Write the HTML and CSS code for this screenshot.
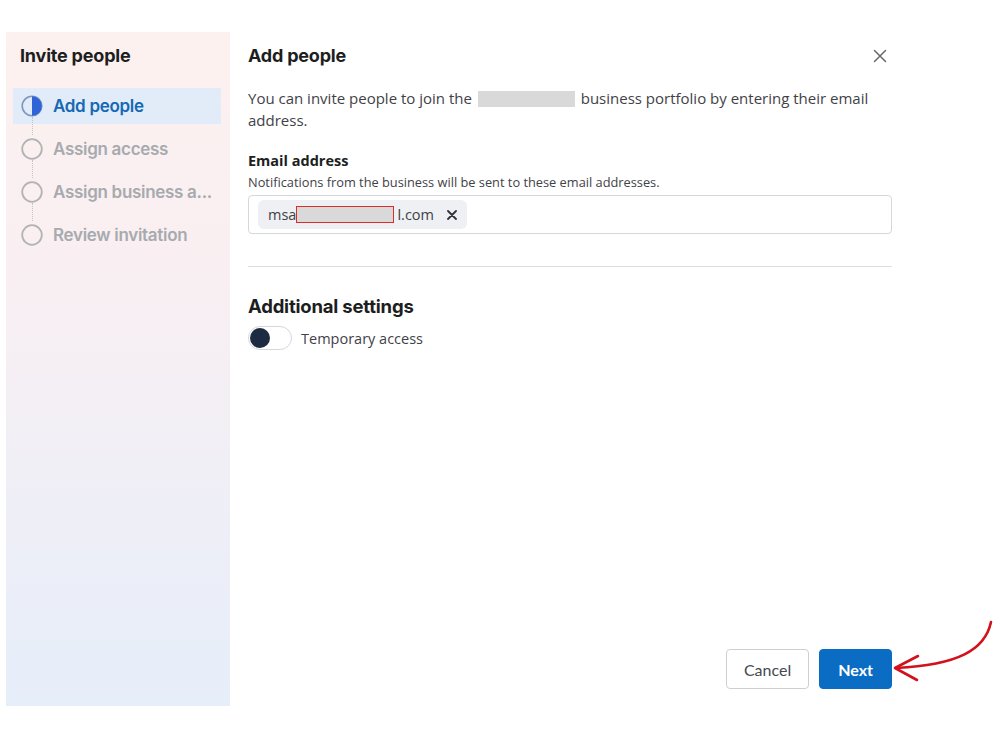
FILE: index.html
```html
<!DOCTYPE html>
<html lang="en">
<head>
    <meta charset="UTF-8">
    <title>Invite people</title>
    <link rel="stylesheet" href="styles.css">
</head>
<body>

<div class="dialog">
    <aside class="sidebar">
        <h2 class="sidebar-title">Invite people</h2>
        <ul class="steps">
            <li class="step active">
                <svg class="step-icon" viewBox="0 0 22 22">
                    <circle cx="11" cy="11" r="9.8" fill="none" stroke="#7f95c4" stroke-width="1.6"/>
                    <path d="M11 1.2 A9.8 9.8 0 0 1 11 20.8 Z" fill="#2f63d8"/>
                </svg>
                <span>Add people</span>
            </li>
            <li class="step">
                <svg class="step-icon" viewBox="0 0 22 22">
                    <circle cx="11" cy="11" r="9.8" fill="none" stroke="#b1b3b6" stroke-width="1.8"/>
                </svg>
                <span>Assign access</span>
            </li>
            <li class="step">
                <svg class="step-icon" viewBox="0 0 22 22">
                    <circle cx="11" cy="11" r="9.8" fill="none" stroke="#b1b3b6" stroke-width="1.8"/>
                </svg>
                <span>Assign business a...</span>
            </li>
            <li class="step">
                <svg class="step-icon" viewBox="0 0 22 22">
                    <circle cx="11" cy="11" r="9.8" fill="none" stroke="#b1b3b6" stroke-width="1.8"/>
                </svg>
                <span>Review invitation</span>
            </li>
        </ul>
    </aside>

    <main class="panel">
        <div class="panel-head">
            <h2 class="panel-title">Add people</h2>
            <svg class="close" viewBox="0 0 14 14" width="14" height="14">
                <path d="M1.5 1.5 L12.5 12.5 M12.5 1.5 L1.5 12.5" stroke="#65686c" stroke-width="1.5" stroke-linecap="round"/>
            </svg>
        </div>
        <p class="intro"><span>You can invite people to join the</span> <span class="redact"></span> <span>business portfolio by entering their email</span><br><span>address.</span></p>

        <div class="field">
            <div class="field-label">Email address</div>
            <div class="field-hint">Notifications from the business will be sent to these email addresses.</div>
            <div class="email-box">
                <span class="chip">msa<span class="redact-red"></span>l.com
                    <svg class="chip-x" viewBox="0 0 10 10" width="10" height="10">
                        <path d="M1 1 L9 9 M9 1 L1 9" stroke="#2f3237" stroke-width="1.8" stroke-linecap="round"/>
                    </svg>
                </span>
            </div>
        </div>

        <hr class="divider">

        <h3 class="section-title">Additional settings</h3>
        <label class="toggle-row">
            <span class="toggle"><span class="knob"></span></span>
            <span>Temporary access</span>
        </label>

        <div class="actions">
            <button class="btn">Cancel</button>
            <button class="btn primary">Next</button>
        </div>
    </main>
</div>

<svg class="arrow" viewBox="0 0 110 80" width="110" height="80">
    <path d="M103 2 C97 30 70 45 8 48" fill="none" stroke="#d3111c" stroke-width="2.6" stroke-linecap="round"/>
    <path d="M30 36 L7 48 L29 60" fill="none" stroke="#d3111c" stroke-width="2.6" stroke-linecap="round" stroke-linejoin="round"/>
</svg>

</body>
</html>
```

FILE: styles.css
```css
body {
    margin: 0;
    background: #fff;
    font-family: "Open Sans", Arial, sans-serif;
    color: #1c1e21;
}
.dialog {
    display: flex;
    padding: 32px 0 0 6px;
    width: 892px;
}
.sidebar {
    width: 224px;
    height: 674px;
    box-sizing: border-box;
    padding: 13px 9px 0 7px;
    background: linear-gradient(180deg, #fdf1ef 0%, #f9eff2 35%, #e6eefa 100%);
}
.sidebar-title {
    font-family: Inter, sans-serif;
    font-size: 18px;
    line-height: 20px;
    font-weight: 700;
    margin: 1px 0 22px 7px;
    letter-spacing: -0.2px;
}
.steps {
    list-style: none;
    margin: 0;
    padding: 0;
}
.step {
    display: flex;
    align-items: center;
    height: 36px;
    margin-bottom: 7px;
    padding-left: 8px;
    font-family: Inter, sans-serif;
    font-size: 17px;
    font-weight: 600;
    color: #a7aaae;
    position: relative;
    letter-spacing: -0.3px;
}
.step + .step::before {
    content: "";
    position: absolute;
    left: 19px;
    top: -14px;
    height: 18px;
    border-left: 1px dotted #c4c4c4;
}
.step.active {
    background: #e1ecf8;
    color: #1568b5;
}
.step-icon {
    width: 22px;
    height: 22px;
    margin-right: 10px;
    flex-shrink: 0;
}
.panel {
    width: 644px;
    height: 674px;
    margin-left: 18px;
    display: flex;
    flex-direction: column;
}
.panel-head {
    display: flex;
    justify-content: space-between;
    align-items: center;
    margin-top: 13px;
}
.panel-title {
    font-family: Inter, sans-serif;
    font-size: 18px;
    line-height: 22px;
    font-weight: 700;
    margin: 0;
    letter-spacing: -0.2px;
}
.close {
    margin-right: 5px;
}
.intro {
    font-size: 15px;
    line-height: 22px;
    color: #3f4247;
    margin: 20px 0 0 0;
}
.redact {
    display: inline-block;
    width: 97px;
    height: 16px;
    background: #d9d9d9;
    vertical-align: -3px;
    margin: 0 2px;
}
.field {
    margin-top: 21px;
}
.field-label {
    font-size: 14.5px;
    line-height: 18px;
    font-weight: 700;
    color: #1c1e21;
}
.field-hint {
    font-size: 12.8px;
    line-height: 16px;
    color: #3f4247;
    margin-top: 4px;
}
.email-box {
    margin-top: 5px;
    height: 39px;
    box-sizing: border-box;
    border: 1px solid #d4d7db;
    border-radius: 4px;
    padding: 4px 9px;
}
.chip {
    display: inline-flex;
    align-items: center;
    height: 29px;
    padding: 0 10px;
    background: #eef0f3;
    border-radius: 6px;
    font-size: 14.5px;
    color: #3f4247;
}
.redact-red {
    display: inline-block;
    width: 98px;
    height: 17px;
    box-sizing: border-box;
    background: #d9d9d9;
    border: 1px solid #e02b2b;
    margin: 0 3px 0 0;
}
.chip-x {
    margin-left: 13px;
}
.divider {
    border: none;
    border-top: 1px solid #dadde1;
    margin: 32px 0 0 0;
}
.section-title {
    font-family: Inter, sans-serif;
    font-size: 18.5px;
    line-height: 24px;
    font-weight: 700;
    margin: 27px 0 0 0;
    letter-spacing: -0.2px;
}
.toggle-row {
    display: flex;
    align-items: center;
    margin-top: 8px;
    font-size: 14.5px;
    color: #3f4247;
}
.toggle {
    width: 44px;
    height: 24px;
    box-sizing: border-box;
    border: 1px solid #d4d7db;
    border-radius: 12px;
    background: #fff;
    margin-right: 9px;
    display: flex;
    align-items: center;
    padding-left: 1px;
}
.knob {
    width: 20px;
    height: 20px;
    border-radius: 50%;
    background: #1c2b41;
}
.actions {
    margin-top: auto;
    margin-bottom: 17px;
    display: flex;
    justify-content: flex-end;
    gap: 10px;
}
.btn {
    height: 40px;
    padding: 0 17px;
    border: 1px solid #ccd0d5;
    border-radius: 4px;
    background: #fff;
    font-family: Lato, sans-serif;
    font-size: 16px;
    color: #444950;
}
.btn.primary {
    background: #0b6cc4;
    border-color: #0b6cc4;
    color: #fff;
    font-weight: 700;
    padding: 0 18px;
}
.arrow {
    position: absolute;
    left: 888px;
    top: 620px;
}
```
